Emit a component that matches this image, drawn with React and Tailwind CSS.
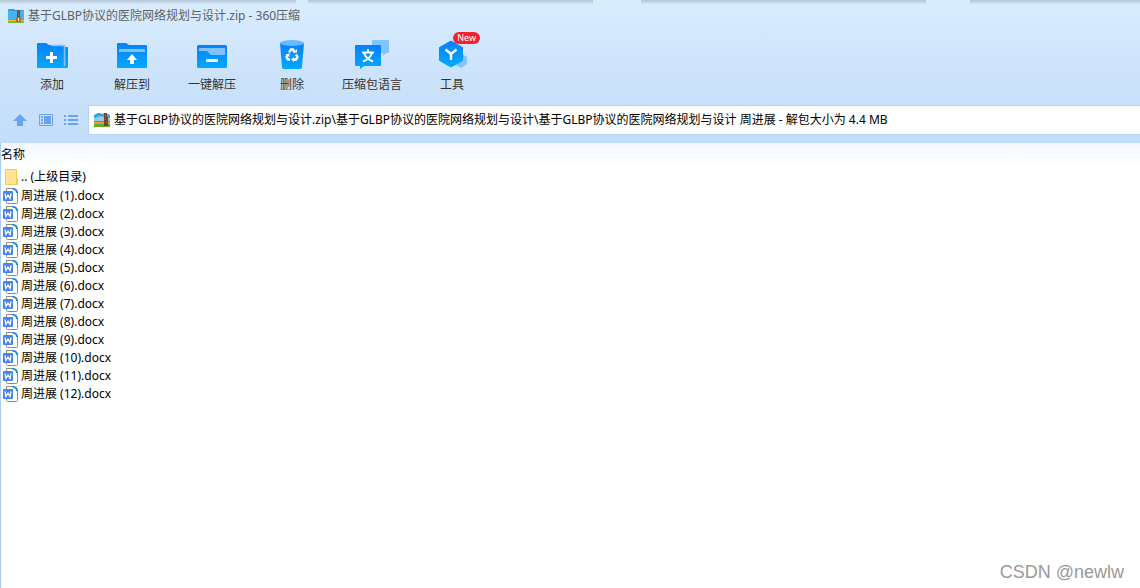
import { useState } from "react";

const ZIP_NAME = "基于GLBP协议的医院网络规划与设计";

const FILES = Array.from({ length: 12 }, (_, i) => `周进展 (${i + 1}).docx`);

const ArchiveIcon = () => (
  <svg width="16" height="16" viewBox="0 0 16 16" className="shrink-0" aria-hidden="true">
    <path d="M0 2q0-1 1-1h5l1 1h8q1 0 1 1v9H0z" fill="#2b9be4" />
    <path d="M0 3h16v8H0z" fill="#45b3f5" />
    <path d="M0 11h16v1H0z" fill="#f2762c" />
    <path d="M0 12h16v1H0z" fill="#f5b93a" />
    <path d="M0 13h16v1q0 1-1 1H1q-1 0-1-1z" fill="#7cba35" />
    <path d="M9 2h3v12H9z" fill="#7d452a" />
    <path d="M10 3h1v1h-1zM10 5h1v1h-1zM10 7h1v1h-1z" fill="#a97248" />
    <path d="M8 9h5v5H8z" fill="#c06a1c" />
    <path d="M10 10h1v3h-1z" fill="#fff" />
  </svg>
);

const PathArchiveIcon = () => (
  <svg width="16" height="16" viewBox="0 0 16 16" className="shrink-0" aria-hidden="true">
    <path d="M0 3l4-2h2l2 1 3-1 5 2v6H0z" fill="#3a9fd6" />
    <path d="M0 6l6-2 10 2v3H0z" fill="#8fcdec" />
    <path d="M0 9h16v1H0z" fill="#f0641e" />
    <path d="M0 10h16v2H0z" fill="#f59a2c" />
    <path d="M0 12h16v3H0z" fill="#5fae2c" />
    <path d="M10 1h3v4h1v9h-4z" fill="#74452b" />
    <path d="M11 3h1v1h-1zM11 7h1v1h-1zM12 10h1v1h-1z" fill="#a57a52" />
  </svg>
);

const BlueGradient = ({ id }) => (
  <defs>
    <linearGradient id={id} x1="0" y1="0" x2="0" y2="1">
      <stop offset="0" stopColor="#0680fb" />
      <stop offset="1" stopColor="#02a9ff" />
    </linearGradient>
  </defs>
);

const AddIcon = () => (
  <svg width="36" height="32" viewBox="0 0 36 32" aria-hidden="true">
    <BlueGradient id="g-add" />
    <path d="M3 4q0-1 1-1h8l3 2h15q1 0 1 1v1h2q1 0 1 1v19q0 1-1 1H4q-1 0-1-1z" fill="url(#g-add)" />
    <path d="M17 5h13q1 0 1 1v20h-1V6H18z" fill="#80c4ff" stroke="#80c4ff" strokeWidth=".6" />
    <path d="M16 12h3v4h4v3h-4v4h-3v-4h-4v-3h4z" fill="#fff" />
  </svg>
);

const ExtractIcon = () => (
  <svg width="36" height="32" viewBox="0 0 36 32" aria-hidden="true">
    <BlueGradient id="g-ext" />
    <path d="M3 4q0-1 1-1h8l3 2h17q1 0 1 1v21q0 1-1 1H4q-1 0-1-1z" fill="url(#g-ext)" />
    <path d="M5 12v-2q0-1 1-1h24q1 0 1 1v2z" fill="#80c4ff" />
    <path d="M18 14l5 6h-3v4h-4v-4h-3z" fill="#fff" />
  </svg>
);

const OneKeyIcon = () => (
  <svg width="36" height="32" viewBox="0 0 36 32" aria-hidden="true">
    <BlueGradient id="g-one" />
    <rect x="3" y="5" width="30" height="23" rx="1.5" fill="url(#g-one)" />
    <path d="M5 11V9q0-1 1-1h24q1 0 1 1v6H18q-2 0-3-2t-3-2z" fill="#80c4ff" />
    <rect x="12" y="19" width="12" height="3" rx="1" fill="#fff" />
  </svg>
);

const TrashIcon = () => (
  <svg width="36" height="32" viewBox="0 0 36 32" aria-hidden="true">
    <BlueGradient id="g-del" />
    <path d="M6 3h24l-2 24q0 2-3 2H11q-3 0-3-2z" fill="url(#g-del)" />
    <ellipse cx="18" cy="3" rx="12" ry="3" fill="#66baff" />
    <g transform="translate(0 -2)">
      <g fill="none" stroke="#fff" strokeWidth="2.4">
        <path d="M15 14.500l2-3h2l2 3" />
        <path d="M22 16.500l1.500 2.500-1.500 2.500h-3" />
        <path d="M16 21.500h-2l-1.500-2.500 1.500-2.500" />
      </g>
      <path d="M19.500 14.500h3.500v-3.500zM19.800 19v5l-2.800-2.500zM11.500 16.500l4-1v3.500z" fill="#fff" />
    </g>
  </svg>
);

const LanguageIcon = () => (
  <svg width="36" height="32" viewBox="0 0 36 32" aria-hidden="true">
    <BlueGradient id="g-lang" />
    <path d="M18 1q0-1 1-1h15q1 0 1 1v11q0 1-1 1h-2l-3 3v-3H18z" fill="#80c4ff" />
    <path d="M1 6q0-1 1-1h24q1 0 1 1v19q0 1-1 1H10l-4 3v-3H2q-1 0-1-1z" fill="url(#g-lang)" />
    <path d="M14 9v3M8 12.500h12M10 13q2 6 9 8.500M18 13q-2 6-9 8.500" fill="none" stroke="#fff" strokeWidth="1.900" />
  </svg>
);

const ToolsIcon = () => (
  <svg width="36" height="32" viewBox="0 0 36 32" aria-hidden="true">
    <BlueGradient id="g-tool" />
    <path d="M28 14l5 3v7l-6 4-5-3z" fill="#80c4ff" />
    <path d="M17 1l11.500 6.500v13L17 27 5.500 20.500v-13z" fill="url(#g-tool)" stroke="url(#g-tool)" strokeLinejoin="round" />
    <path d="M11.500 9.500L17 14l5.500-4.500M17 13.500v6.500" fill="none" stroke="#fff" strokeWidth="2.400" />
  </svg>
);

const FolderIcon = () => (
  <svg width="16" height="18" viewBox="0 0 16 18" className="shrink-0" aria-hidden="true">
    <path d="M2.500 1.500h11v9h1v6h-12z" fill="#ffe593" stroke="#efca5c" />
    <path d="M13.500 10v6" stroke="#efca5c" />
  </svg>
);

const DocIcon = () => (
  <svg width="16" height="18" viewBox="0 0 16 18" className="shrink-0" aria-hidden="true">
    <path d="M3.500 1.500h7l4 4v10q0 1-1 1h-9q-1 0-1-1z" fill="#fff" stroke="#8b8b8b" />
    <path d="M9 1h2q4 1 4 5h-2q0-3-2-3t-2-2z" fill="#2588d9" />
    <rect x="0" y="4" width="10" height="10" rx="1" fill="#4384ef" />
    <path d="M2 6.500l1 5 2-3.500 2 3.500 1-5" fill="none" stroke="#fff" strokeWidth="1.300" />
  </svg>
);

const TOOLS = [
  { label: "添加", Icon: AddIcon },
  { label: "解压到", Icon: ExtractIcon },
  { label: "一键解压", Icon: OneKeyIcon },
  { label: "删除", Icon: TrashIcon },
  { label: "压缩包语言", Icon: LanguageIcon },
  { label: "工具", Icon: ToolsIcon, badge: "New" },
];

// shadows cast by the windows behind the title bar
const TopShadow = () => (
  <div className="flex h-1 gap-3" aria-hidden="true">
    <div className="basis-[26%] bg-linear-to-b from-[#b1c5d7] to-[#d5e8fa]" />
    <div className="mr-9 basis-[25%] bg-linear-to-b from-[#b1c5d7] to-[#d5e8fa]" />
    <div className="mr-8 basis-[25%] bg-linear-to-b from-[#b1c5d7] to-[#d5e8fa]" />
    <div className="flex-1 bg-linear-to-b from-[#b1c5d7] to-[#d5e8fa]" />
  </div>
);

const App = () => {
  const [path, setPath] = useState(
    `${ZIP_NAME}.zip\\${ZIP_NAME}\\${ZIP_NAME} 周进展 - 解包大小为 4.4 MB`
  );

  return (
    <div className="flex min-h-screen flex-col bg-white font-['Noto_Sans','Noto_Sans_CJK_SC',sans-serif] text-xs text-black">
      <header className="bg-linear-to-b from-[#d9edff] via-[#cde3fb] to-[#c2defa] pb-2">
        <TopShadow />
        <div className="flex h-6 items-center gap-1 pl-2 text-[#5d6165]">
          <ArchiveIcon />
          <h1>{ZIP_NAME}.zip - 360压缩</h1>
        </div>

        <nav className="flex pt-3 pb-[11px] pl-3">
          {TOOLS.map(({ label, Icon, badge }) => (
            <button key={label} type="button" className="relative flex w-20 flex-col items-center gap-1 text-[#333]">
              <Icon />
              <span className="leading-[18px]">{label}</span>
              {badge && (
                <span className="absolute -top-2 right-3 rounded-full bg-[#f5222d] px-1 text-[9px] leading-3 text-white">
                  {badge}
                </span>
              )}
            </button>
          ))}
        </nav>

        <div className="flex items-center">
          <div className="flex w-22 items-center gap-[11px] pl-3">
            <button type="button" aria-label="向上">
              <svg width="16" height="16" viewBox="0 0 16 16" fill="#6ba3ee"><path d="M8 2l7 7h-4v5H5V9H1z" /></svg>
            </button>
            <button type="button" aria-label="预览">
              <svg width="14" height="16" viewBox="0 0 14 16" fill="#6ba3ee">
                <path d="M.5 2.500h13v11H.5z" fill="none" stroke="#6ba3ee" />
                <path d="M2 4h2v2H2zM2 7h2v2H2zM2 10h2v2H2zM5 4h7v8H5z" />
              </svg>
            </button>
            <button type="button" aria-label="列表">
              <svg width="14" height="16" viewBox="0 0 14 16" fill="#6ba3ee">
                <path d="M0 3h2v2H0zM4 3h10v2H4zM0 7h2v2H0zM4 7h10v2H4zM0 11h2v2H0zM4 11h10v2H4z" />
              </svg>
            </button>
          </div>
          <div className="flex h-[30px] flex-1 items-center gap-1 border border-r-0 border-[#b5d3f2] bg-white pl-[5px]">
            <PathArchiveIcon />
            <input
              aria-label="路径"
              value={path}
              onChange={(e) => setPath(e.target.value)}
              className="min-w-0 flex-1 bg-transparent outline-none"
            />
          </div>
        </div>
      </header>

      <main className="flex flex-1 flex-col border-l border-[#a9cdf3]">
        <table className="w-full text-left">
          <thead>
            <tr className="h-6 bg-linear-to-b from-[#f2f8fe] to-white">
              <th scope="col" className="p-0 font-normal">名称</th>
            </tr>
          </thead>
          <tbody>
            <tr className="h-5">
              <td className="p-0">
                <div className="flex items-center gap-0.5 pl-0.5 leading-[18px]">
                  <FolderIcon />
                  <span>.. (上级目录)</span>
                </div>
              </td>
            </tr>
            {FILES.map((name) => (
              <tr key={name}>
                <td className="p-0">
                  <div className="flex h-[18px] items-center gap-0.5 pl-0.5 leading-[18px]">
                    <DocIcon />
                    <span>{name}</span>
                  </div>
                </td>
              </tr>
            ))}
          </tbody>
        </table>

        <footer className="mt-auto px-4 pb-1 text-right font-['Liberation_Sans',sans-serif] text-lg leading-6 text-[#999]">
          CSDN @newlw
        </footer>
      </main>
    </div>
  );
};

export default App;
